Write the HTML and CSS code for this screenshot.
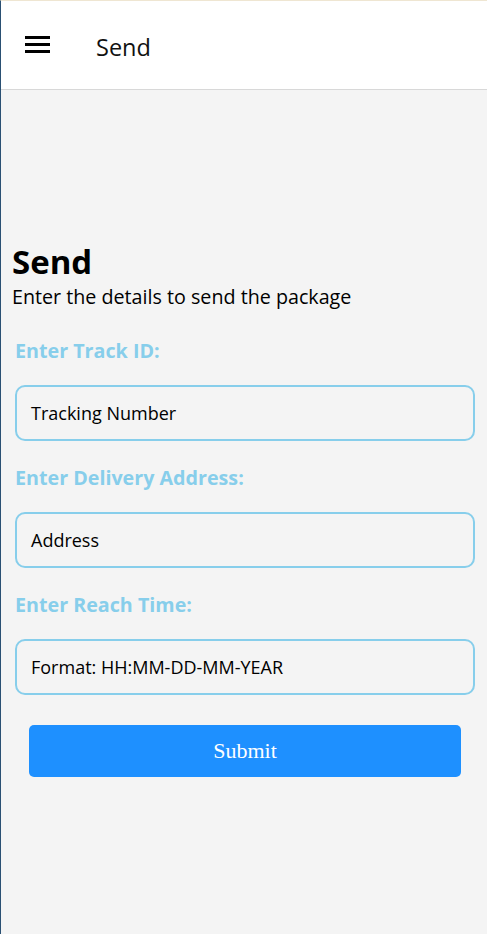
FILE: index.html
```html
<!DOCTYPE html>
<html lang="en">
<head>
<meta charset="utf-8">
<title>Send</title>
<link rel="stylesheet" href="styles.css">
</head>
<body>
<div class="app">
  <header class="topbar">
    <button class="menu" aria-label="Menu">
      <span></span><span></span><span></span>
    </button>
    <div class="title">Send</div>
  </header>
  <main class="content">
    <h1 class="heading">Send</h1>
    <p class="sub">Enter the details to send the package</p>
    <form class="form">
      <label class="label">Enter Track ID:</label>
      <div class="field">Tracking Number</div>
      <label class="label">Enter Delivery Address:</label>
      <div class="field">Address</div>
      <label class="label">Enter Reach Time:</label>
      <div class="field">Format: HH:MM-DD-MM-YEAR</div>
      <div class="actions">
        <button type="button" class="submit">Submit</button>
      </div>
    </form>
  </main>
</div>
</body>
</html>
```
FILE: styles.css
```css
html, body {
  margin: 0;
  padding: 0;
  height: 100%;
}
body {
  background: #f4f4f4;
  font-family: "Open Sans", "Noto Sans", sans-serif;
}
.app {
  min-height: 100%;
  box-sizing: border-box;
  border-left: 1px solid #2a5073;
  border-top: 1px solid #efe6d2;
  display: flex;
  flex-direction: column;
}
.topbar {
  height: 89px;
  background: #fff;
  border-bottom: 1px solid #d8d8d8;
  display: flex;
  align-items: center;
  padding-left: 24px;
  padding-top: 4px;
  box-sizing: border-box;
}
.menu {
  width: 25px;
  height: 17px;
  padding: 0;
  border: 0;
  background: none;
  display: flex;
  flex-direction: column;
  justify-content: space-between;
  margin-right: 46px;
  margin-top: -6px;
}
.menu span {
  display: block;
  height: 3px;
  background: #000;
}
.title {
  font-size: 23.5px;
  color: #111;
}
.content {
  flex: 1;
  padding: 149px 11px 0 11px;
}
.heading {
  margin: 0;
  font-size: 33px;
  font-weight: 700;
  line-height: 46px;
  color: #000;
}
.sub {
  margin: 0;
  font-size: 19.7px;
  line-height: 24px;
  color: #000;
}
.form {
  display: flex;
  flex-direction: column;
  padding: 0 1px 0 3px;
  margin-top: 29px;
}
.label {
  font-size: 19.7px;
  font-weight: 700;
  color: #87ceeb;
  line-height: 26px;
  margin-bottom: 21px;
}
.field {
  height: 52px;
  border: 2px solid #87ceeb;
  border-radius: 10px;
  display: flex;
  align-items: center;
  padding-left: 14px;
  font-size: 18px;
  color: #000;
  margin-bottom: 24px;
}
.actions {
  padding: 6px 14px 0 14px;
}
.submit {
  display: block;
  width: 100%;
  height: 52px;
  border: 0;
  border-radius: 5px;
  background: #1e90ff;
  color: #fff;
  font-family: "Liberation Serif", serif;
  font-size: 22px;
}
```
